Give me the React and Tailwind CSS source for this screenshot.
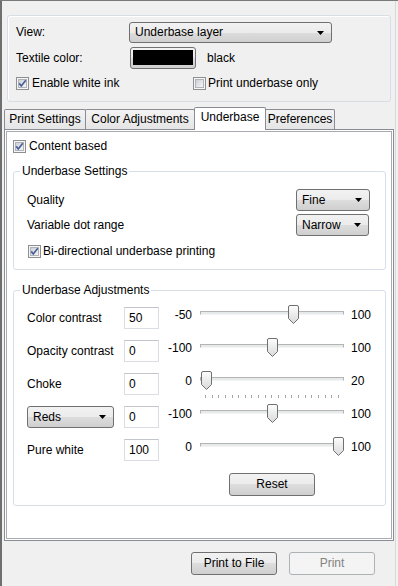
import React from 'react';

const btnBg = 'bg-[linear-gradient(#f2f2f2,#ebebeb_50%,#dddddd_50%,#cfcfcf)]';

function CheckBox({ checked }) {
    return (
        <svg width="13" height="13" viewBox="0 0 13 13" className="shrink-0">
            <defs>
                <linearGradient id="cbg" x1="0" y1="0" x2="1" y2="1">
                    <stop offset="0" stopColor="#c9ced6" />
                    <stop offset="1" stopColor="#f7f7f7" />
                </linearGradient>
            </defs>
            <rect x="0.5" y="0.5" width="12" height="12" fill="#f6f6f6" stroke="#8e8f8f" />
            <rect x="2.5" y="2.5" width="8" height="8" fill="url(#cbg)" stroke="#b0b4ba" />
            {checked && <path d="M3.2 6.4 L5.3 9 L9.8 3.3" fill="none" stroke="#4a5f97" strokeWidth="1.7" />}
        </svg>
    );
}

function Arrow() {
    return (
        <svg width="7" height="4" viewBox="0 0 7 4" className="shrink-0">
            <path d="M0 0 H7 L3.5 4 Z" fill="#000" />
        </svg>
    );
}

function Combo({ text, className }) {
    return (
        <div className={`flex items-center justify-between border border-[#707070] rounded-[3px] pl-[5px] pr-[7px] ${btnBg} ${className}`}>
            <span>{text}</span>
            <Arrow />
        </div>
    );
}

function Thumb() {
    return (
        <svg width="11" height="19" viewBox="0 0 11 19">
            <defs>
                <linearGradient id="thg" x1="0" y1="0" x2="0" y2="1">
                    <stop offset="0" stopColor="#fdfdfd" />
                    <stop offset="1" stopColor="#d9d9d9" />
                </linearGradient>
            </defs>
            <path d="M0.5 2 Q0.5 0.5 2 0.5 H9 Q10.5 0.5 10.5 2 V13.5 L5.5 18.5 L0.5 13.5 Z" fill="url(#thg)" stroke="#707070" />
        </svg>
    );
}

function Group({ title, className, children }) {
    return (
        <div className={`relative border border-[#d5dfe5] rounded-[3px] ${className}`}>
            <span className="absolute left-[6px] -top-[9px] bg-white px-[2px] leading-[16px]">{title}</span>
            {children}
        </div>
    );
}

const sliders = [
    { label: 'Color contrast', value: '50', min: '-50', max: '100', pos: 88 },
    { label: 'Opacity contrast', value: '0', min: '-100', max: '100', pos: 67 },
    { label: 'Choke', value: '0', min: '0', max: '20', pos: 1, ticks: true },
    { combo: 'Reds', value: '0', min: '-100', max: '100', pos: 67 },
    { label: 'Pure white', value: '100', min: '0', max: '100', pos: 133 },
];

function SliderRow({ row }) {
    return (
        <div className="flex items-start h-[22px]">
            <div className="w-[97px] h-[22px] flex items-center">
                {row.combo ? <Combo text={row.combo} className="w-[87px] h-[22px]" /> : row.label}
            </div>
            <div className="w-[35px] h-[22px] flex items-center pl-[4px] bg-white border border-[#dadde2] border-t-[#c2c5ca]">
                {row.value}
            </div>
            <div className="w-[33px] h-[16px] flex items-center justify-end">{row.min}</div>
            <div className="relative ml-[8px] w-[144px] h-[16px]">
                <div className="absolute left-0 right-0 top-[4px] h-[4px] bg-[#e7eaea] border border-[#b4b4b4] border-b-[#f4f4f4]" />
                <div className="absolute -top-[2px]" style={{ left: row.pos }}>
                    <Thumb />
                </div>
                {row.ticks && (
                    <div className="absolute left-[5px] w-[134px] top-[22px] h-[3px] flex justify-between">
                        {Array.from({ length: 21 }).map((_, i) => (
                            <div key={i} className="w-px h-[3px] bg-[#a5a5a5]" />
                        ))}
                    </div>
                )}
            </div>
            <div className="ml-[7px] h-[16px] flex items-center">{row.max}</div>
        </div>
    );
}

function Tab({ text, active, className }) {
    if (active) {
        return (
            <div className={`relative z-10 -ml-px -mb-px h-[23px] bg-white border border-b-0 border-[#898c95] rounded-t-[2px] flex justify-center pt-[2px] ${className}`}>
                {text}
            </div>
        );
    }
    return (
        <div className={`h-[20px] -ml-px first:ml-0 border border-b-0 border-[#898c95] rounded-t-[2px] bg-[linear-gradient(#f3f3f3,#e5e5e5)] flex items-center justify-center ${className}`}>
            {text}
        </div>
    );
}

export default function App() {
    return (
        <div className="w-[398px] h-[586px] bg-[#f0f0f0] flex border-t border-t-[#7a7a7a] text-[12px] leading-[15px] text-black font-['Segoe_UI','Liberation_Sans',sans-serif]">
            <div className="w-[2px] bg-[#6f6f6f]" />
            <div className="w-[393px] flex flex-col">
                {/* view options */}
                <div className="mt-[14px] ml-[5px] w-[384px] h-[87px] border border-[#d5dfe5] rounded-[3px] shadow-[inset_1px_1px_0_#fff] pl-[8px] pt-[6px]">
                    <div className="flex items-center h-[21px]">
                        <div className="w-[113px]">View:</div>
                        <Combo text="Underbase layer" className="w-[203px] h-[21px]" />
                    </div>
                    <div className="flex items-center h-[22px] mt-[4px]">
                        <div className="w-[113px]">Textile color:</div>
                        <div className={`ml-px w-[66px] h-[22px] border border-[#707070] rounded-[3px] pt-[2px] px-[2px] ${btnBg}`}>
                            <div className="h-[15px] bg-black" />
                        </div>
                        <div className="ml-[11px]">black</div>
                    </div>
                    <div className="flex items-center h-[13px] mt-[8px]">
                        <div className="w-[177px] flex items-center gap-[3px]">
                            <CheckBox checked />
                            <span>Enable white ink</span>
                        </div>
                        <div className="flex items-center gap-[2px]">
                            <CheckBox />
                            <span>Print underbase only</span>
                        </div>
                    </div>
                </div>

                {/* tabs */}
                <div className="flex items-end h-[22px] mt-[5px] ml-[2px]">
                    <Tab text="Print Settings" className="w-[82px]" />
                    <Tab text="Color Adjustments" className="w-[110px]" />
                    <Tab text="Underbase" active className="w-[72px]" />
                    <Tab text="Preferences" className="w-[70px]" />
                </div>

                <div className="ml-[2px] w-[390px] h-[412px] border border-[#898c95] bg-white p-px">
                    <div className="h-full border border-[#a9abb0] pl-[6px] pt-[8px]">
                        <div className="flex items-center h-[13px] gap-[3px]">
                            <CheckBox checked />
                            <span>Content based</span>
                        </div>

                        <Group title="Underbase Settings" className="mt-[18px] w-[373px] pt-[17px] pl-[13px] pr-[15px] pb-[11px]">
                            <div className="flex items-center justify-between h-[22px]">
                                <span>Quality</span>
                                <Combo text="Fine" className="w-[74px] h-[22px]" />
                            </div>
                            <div className="flex items-center justify-between h-[22px] mt-[3px]">
                                <span>Variable dot range</span>
                                <Combo text="Narrow" className="w-[73px] h-[22px] mr-px" />
                            </div>
                            <div className="flex items-center h-[13px] mt-[9px] ml-px gap-[2px]">
                                <CheckBox checked />
                                <span>Bi-directional underbase printing</span>
                            </div>
                        </Group>

                        <Group title="Underbase Adjustments" className="mt-[20px] w-[373px] pt-[16px] pl-[13px] pb-[9px]">
                            <div className="flex flex-col gap-[11px]">
                                {sliders.map((row, i) => (
                                    <SliderRow key={i} row={row} />
                                ))}
                            </div>
                            <div className="mt-[12px] ml-[202px]">
                                <div className={`w-[86px] h-[23px] border border-[#707070] rounded-[3px] flex items-center justify-center ${btnBg}`}>
                                    Reset
                                </div>
                            </div>
                        </Group>
                    </div>
                </div>

                {/* bottom buttons */}
                <div className="flex justify-end gap-[12px] pr-[20px] mt-[11px]">
                    <div className={`w-[86px] h-[23px] border border-[#707070] rounded-[3px] flex items-center justify-center ${btnBg}`}>
                        Print to File
                    </div>
                    <div className="w-[86px] h-[23px] border border-[#adb2b5] rounded-[3px] bg-[#f4f4f4] text-[#838383] flex items-center justify-center">
                        Print
                    </div>
                </div>
            </div>
            <div className="w-px bg-[#dadada]" />
        </div>
    );
}
